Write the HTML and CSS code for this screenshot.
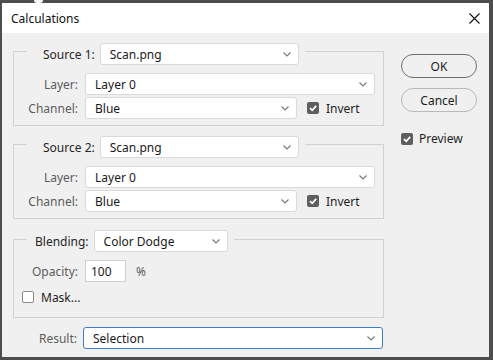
FILE: index.html
```html
<!DOCTYPE html>
<html>
<head>
  <meta charset="UTF-8">
  <title>Calculations</title>
  <link rel="stylesheet" href="styles.css">
</head>
<body>
  <div class="screen">
    <span class="cursor"></span>
    <div class="dialog">
      <div class="titlebar">
        <span class="title">Calculations</span>
        <svg class="close" width="11" height="11" viewBox="0 0 11 11"><path d="M0.5 0.5 L10.5 10.5 M10.5 0.5 L0.5 10.5" stroke="#111" stroke-width="1.1"/></svg>
      </div>

      <div class="body">
        <div class="main">
          <!-- Source 1 -->
          <div class="group">
            <div class="legend">
              <span class="legend-label">Source 1:</span>
              <div class="select w-src">Scan.png<svg class="chev" width="8" height="5" viewBox="0 0 8 5"><path d="M0.5 0.5 L4 4 L7.5 0.5" fill="none" stroke="#777" stroke-width="1.1"/></svg></div>
            </div>
            <div class="row first">
              <span class="lbl">Layer:</span>
              <div class="select w-layer">Layer 0<svg class="chev" width="8" height="5" viewBox="0 0 8 5"><path d="M0.5 0.5 L4 4 L7.5 0.5" fill="none" stroke="#777" stroke-width="1.1"/></svg></div>
            </div>
            <div class="row">
              <span class="lbl">Channel:</span>
              <div class="select w-chan">Blue<svg class="chev" width="8" height="5" viewBox="0 0 8 5"><path d="M0.5 0.5 L4 4 L7.5 0.5" fill="none" stroke="#777" stroke-width="1.1"/></svg></div>
              <span class="check on"><svg width="12" height="12" viewBox="0 0 12 12"><path d="M3 6.2 L5.2 8.3 L9.2 3.8" fill="none" stroke="#fff" stroke-width="1.8"/></svg></span>
              <span class="check-label">Invert</span>
            </div>
          </div>

          <!-- Source 2 -->
          <div class="group">
            <div class="legend">
              <span class="legend-label">Source 2:</span>
              <div class="select w-src">Scan.png<svg class="chev" width="8" height="5" viewBox="0 0 8 5"><path d="M0.5 0.5 L4 4 L7.5 0.5" fill="none" stroke="#777" stroke-width="1.1"/></svg></div>
            </div>
            <div class="row first">
              <span class="lbl">Layer:</span>
              <div class="select w-layer">Layer 0<svg class="chev" width="8" height="5" viewBox="0 0 8 5"><path d="M0.5 0.5 L4 4 L7.5 0.5" fill="none" stroke="#777" stroke-width="1.1"/></svg></div>
            </div>
            <div class="row">
              <span class="lbl">Channel:</span>
              <div class="select w-chan">Blue<svg class="chev" width="8" height="5" viewBox="0 0 8 5"><path d="M0.5 0.5 L4 4 L7.5 0.5" fill="none" stroke="#777" stroke-width="1.1"/></svg></div>
              <span class="check on"><svg width="12" height="12" viewBox="0 0 12 12"><path d="M3 6.2 L5.2 8.3 L9.2 3.8" fill="none" stroke="#fff" stroke-width="1.8"/></svg></span>
              <span class="check-label">Invert</span>
            </div>
          </div>

          <!-- Blending -->
          <div class="group blend">
            <div class="legend">
              <span class="legend-label">Blending:</span>
              <div class="select w-blend">Color Dodge<svg class="chev" width="8" height="5" viewBox="0 0 8 5"><path d="M0.5 0.5 L4 4 L7.5 0.5" fill="none" stroke="#777" stroke-width="1.1"/></svg></div>
            </div>
            <div class="row first">
              <span class="lbl">Opacity:</span>
              <div class="field">100</div>
              <span class="unit">%</span>
            </div>
            <div class="row mask">
              <span class="check"></span>
              <span class="check-label">Mask...</span>
            </div>
          </div>

          <div class="row result">
            <span class="lbl">Result:</span>
            <div class="select w-result focus">Selection<svg class="chev" width="8" height="5" viewBox="0 0 8 5"><path d="M0.5 0.5 L4 4 L7.5 0.5" fill="none" stroke="#777" stroke-width="1.1"/></svg></div>
          </div>
        </div>

        <div class="side">
          <div class="button default">OK</div>
          <div class="button">Cancel</div>
          <div class="preview">
            <span class="check on"><svg width="12" height="12" viewBox="0 0 12 12"><path d="M3 6.2 L5.2 8.3 L9.2 3.8" fill="none" stroke="#fff" stroke-width="1.8"/></svg></span>
            <span class="check-label">Preview</span>
          </div>
        </div>
      </div>
    </div>
  </div>
</body>
</html>
```

FILE: styles.css
```css
body {
  margin: 0;
  font-family: 'Noto Sans', 'Liberation Sans', sans-serif;
  font-size: 12px;
  color: #1e1e1e;
}
.screen {
  position: relative;
  height: 360px;
  box-sizing: border-box;
  padding: 3px 4px 3px 2px;
  background: #4d4d4d;
}
.cursor {
  position: absolute;
  left: 34px;
  top: 0;
  width: 9px;
  height: 3px;
  background: #fafafa;
  border-radius: 0 0 4px 4px;
}
.dialog {
  height: 354px;
  display: flex;
  flex-direction: column;
  background: #f0f0f0;
}
.titlebar {
  height: 30px;
  flex: none;
  display: flex;
  align-items: center;
  justify-content: space-between;
  background: #fff;
  padding: 0 9px 0 9px;
}
.title {
  color: #111;
  font-size: 12px;
}
.close {
  margin-top: 1px;
}
.body {
  flex: 1;
  display: flex;
  padding: 18px 0 0 11px;
}
.main {
  width: 371px;
}
.group {
  border: 1px solid #d2d2d2;
  padding: 0 0 6px 0;
  margin-bottom: 18px;
}
.group.blend {
  margin-top: 20px;
  padding-bottom: 10px;
  margin-bottom: 0;
}
.legend {
  display: flex;
  align-items: center;
  width: fit-content;
  margin: -9px 0 0 13px;
  padding: 0 6px 0 16px;
  background: #f0f0f0;
}
.blend .legend {
  margin-top: -10px;
  padding-left: 8px;
}
.legend-label {
  margin-right: 5px;
  color: #262626;
}
.row {
  display: flex;
  align-items: center;
  margin-top: 2px;
}
.row.first {
  margin-top: 8px;
}
.lbl {
  width: 64px;
  margin-right: 7px;
  text-align: right;
  color: #5c5c5c;
}
.select {
  height: 22px;
  box-sizing: border-box;
  display: flex;
  align-items: center;
  justify-content: space-between;
  padding: 0 7px 0 9px;
  background: #fff;
  border: 1px solid #dadada;
  border-radius: 3px;
  color: #1a1a1a;
}
.chev {
  margin-top: 1px;
}
.w-src { width: 199px; }
.w-layer { width: 290px; }
.w-chan { width: 212px; }
.w-blend { width: 134px; }
.w-result { width: 300px; }
.select.focus {
  border-color: #3f7fc9;
}
.check {
  width: 12px;
  height: 12px;
  box-sizing: border-box;
  border: 1px solid #8a8a8a;
  border-radius: 2px;
  background: #fff;
  display: flex;
}
.check.on {
  border: none;
  background: #5f5f5f;
}
.row .check {
  margin-left: 10px;
}
.check-label {
  margin-left: 7px;
  color: #1e1e1e;
}
.field {
  width: 41px;
  height: 22px;
  box-sizing: border-box;
  padding-left: 5px;
  display: flex;
  align-items: center;
  background: #fff;
  border: 1px solid #d0d0d0;
  color: #1a1a1a;
}
.unit {
  margin-left: 10px;
  color: #5c5c5c;
}
.row.mask {
  height: 20px;
  margin-top: 5px;
}
.row.mask .check {
  margin-left: 8px;
}
.row.result {
  margin-top: 9px;
}
.row.result .lbl {
  margin-right: 6px;
}
.side {
  margin-left: 17px;
  padding-top: 3px;
  width: 76px;
}
.button {
  height: 24px;
  box-sizing: border-box;
  display: flex;
  align-items: center;
  justify-content: center;
  border: 1px solid #b9b9b9;
  border-radius: 12px;
  color: #1e1e1e;
  margin-bottom: 10px;
}
.button.default {
  border-color: #6e6e6e;
}
.preview {
  display: flex;
  align-items: center;
  margin-top: 18px;
}
.preview .check-label {
  margin-left: 6px;
}
```
